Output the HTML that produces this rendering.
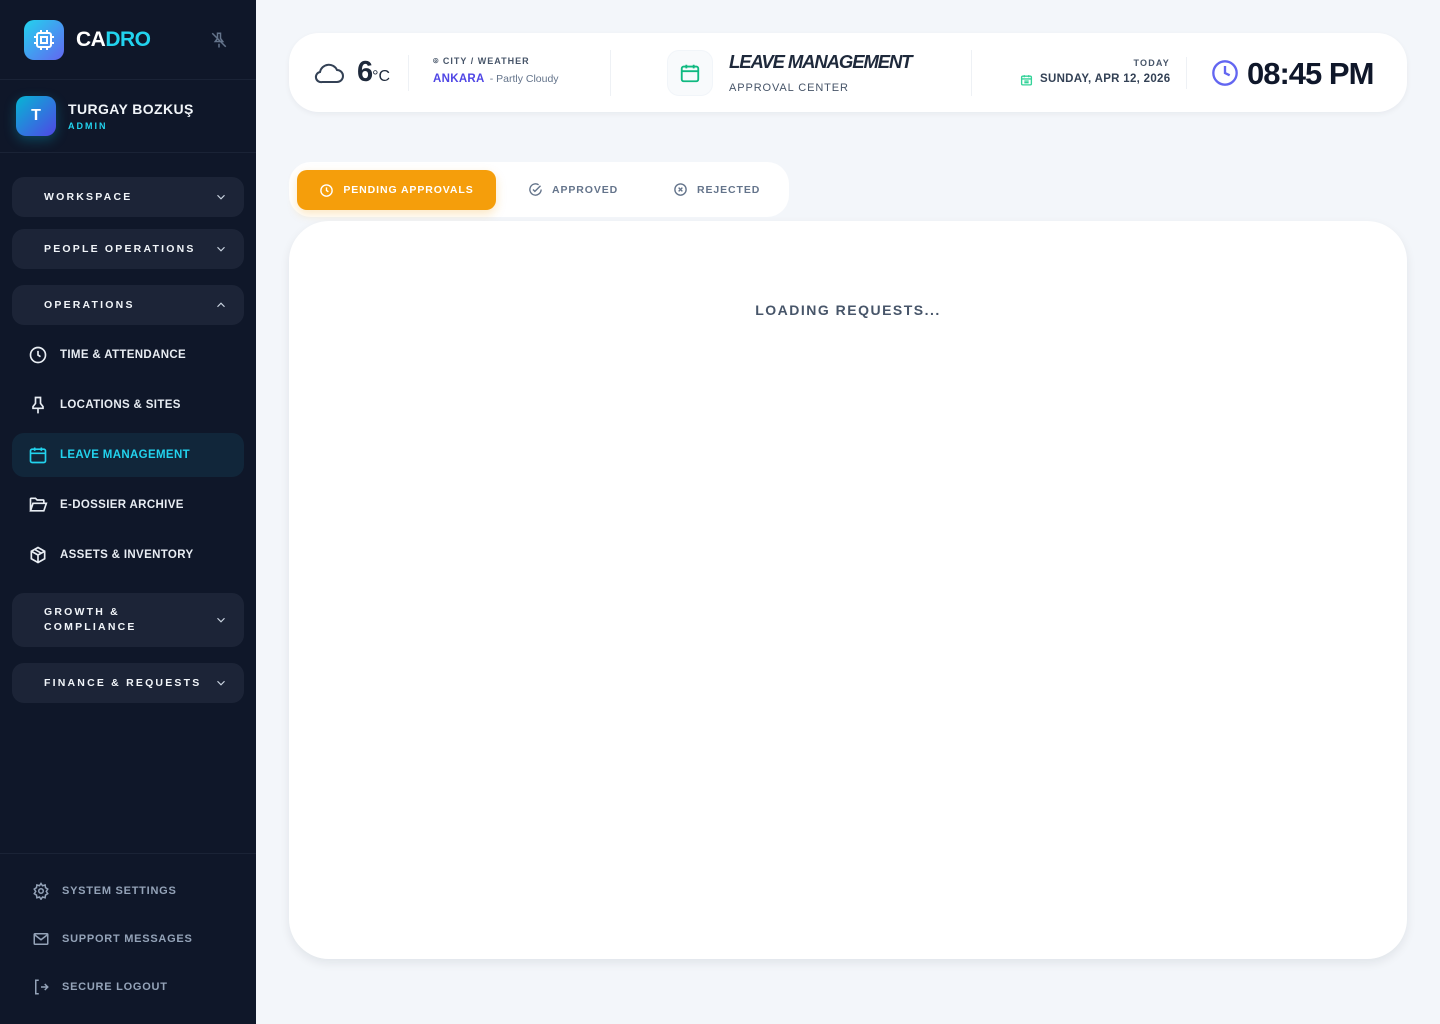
<!DOCTYPE html>
<html><head><meta charset="utf-8"><style>
*{box-sizing:border-box;margin:0;padding:0}
body{width:1440px;height:1024px;overflow:hidden;background:#f3f6fa;font-family:"Liberation Sans",sans-serif;position:relative}
.sb{position:absolute;left:0;top:0;width:256px;height:1024px;background:#0f1729}
.abs{position:absolute}
.grp{position:absolute;left:12px;width:232px;background:#1c2437;border-radius:12px;color:#f1f5f9;font-weight:700;font-size:10.5px;letter-spacing:2.2px;padding-left:32px;display:flex;align-items:center}
.grp svg{position:absolute;right:16px}
.it{position:absolute;left:12px;width:232px;height:44px;display:flex;align-items:center;padding-left:48px;color:#e8edf3;font-size:11.5px;font-weight:700;letter-spacing:.35px}
.it svg{position:absolute;left:16px}
.bt{position:absolute;left:32px;display:flex;align-items:center;color:#94a3b8;font-size:11px;letter-spacing:.75px;font-weight:700}
.bt svg{margin-right:12px}
</style></head><body>
<div class="sb">
  <div class="abs" style="left:24px;top:20px;width:40px;height:40px;border-radius:10px;background:linear-gradient(135deg,#22d3ee,#6366f1);display:flex;align-items:center;justify-content:center">
    <svg width="24" height="24" viewBox="0 0 24 24" fill="none" stroke="#fff" stroke-width="2"><rect x="5" y="5" width="14" height="14" rx="2"/><rect x="9" y="9" width="6" height="6"/><path d="M9 2v3M15 2v3M9 19v3M15 19v3M2 9h3M2 15h3M19 9h3M19 15h3"/></svg>
  </div>
  <div class="abs" style="left:76px;top:28px;font-size:21px;font-weight:800;letter-spacing:-.5px;color:#fff">CA<span style="color:#22d3ee">DRO</span></div>
  <svg class="abs" style="left:210px;top:31px" width="18" height="18" viewBox="0 0 24 24" fill="none" stroke="#64748b" stroke-width="2"><path d="M12 17v5M9 3h6M10 3v7l-3 4h10l-3-4V3M3 3l18 18"/></svg>
  <div class="abs" style="left:0;top:79px;width:256px;height:1px;background:#1a2336"></div>
  <div class="abs" style="left:16px;top:96px;width:40px;height:40px;border-radius:10px;background:linear-gradient(135deg,#06b6d4,#4f46e5);color:#fff;font-weight:700;font-size:16px;display:flex;align-items:center;justify-content:center;box-shadow:0 4px 12px rgba(6,182,212,.3)">T</div>
  <div class="abs" style="left:68px;top:101px;color:#f1f5f9;font-size:14px;font-weight:700;letter-spacing:.4px">TURGAY BOZKUŞ</div>
  <div class="abs" style="left:68px;top:121px;color:#22d3ee;font-size:9px;font-weight:700;letter-spacing:2px">ADMIN</div>
  <div class="abs" style="left:0;top:152px;width:256px;height:1px;background:#1a2336"></div>

  <div class="grp" style="top:177px;height:40px">WORKSPACE<svg width="14" height="14" viewBox="0 0 24 24" fill="none" stroke="#cbd5e1" stroke-width="2"><path d="M6 9l6 6 6-6"/></svg></div>
  <div class="grp" style="top:229px;height:40px">PEOPLE OPERATIONS<svg width="14" height="14" viewBox="0 0 24 24" fill="none" stroke="#cbd5e1" stroke-width="2"><path d="M6 9l6 6 6-6"/></svg></div>
  <div class="grp" style="top:285px;height:40px">OPERATIONS<svg width="14" height="14" viewBox="0 0 24 24" fill="none" stroke="#cbd5e1" stroke-width="2"><path d="M6 15l6-6 6 6"/></svg></div>

  <div class="it" style="top:333px"><svg width="20" height="20" viewBox="0 0 24 24" fill="none" stroke="#e8edf3" stroke-width="2"><circle cx="12" cy="12" r="9"/><path d="M12 7v5l3 2"/></svg>TIME &amp; ATTENDANCE</div>
  <div class="it" style="top:383px"><svg width="20" height="20" viewBox="0 0 24 24" fill="none" stroke="#e8edf3" stroke-width="2"><path d="M12 17v5M8 3h8M9 3v7l-3 4v2h12v-2l-3-4V3"/></svg>LOCATIONS &amp; SITES</div>
  <div class="it" style="top:433px;background:#11263a;border-radius:12px;color:#22d3ee"><svg width="20" height="20" viewBox="0 0 24 24" fill="none" stroke="#22d3ee" stroke-width="2"><rect x="3" y="5" width="18" height="16" rx="2"/><path d="M3 10h18M8 3v4M16 3v4"/></svg>LEAVE MANAGEMENT</div>
  <div class="it" style="top:483px"><svg width="20" height="20" viewBox="0 0 24 24" fill="none" stroke="#e8edf3" stroke-width="2"><path d="M3 19V5a1 1 0 011-1h5l2 2h7a1 1 0 011 1v3M3 19l3-9h16l-3 9z"/></svg>E-DOSSIER ARCHIVE</div>
  <div class="it" style="top:533px"><svg width="20" height="20" viewBox="0 0 24 24" fill="none" stroke="#e8edf3" stroke-width="2"><path d="M12 3l8 4.5v9L12 21l-8-4.5v-9zM4 7.5l8 4.5 8-4.5M12 12v9M8 5.3l8 4.5"/></svg>ASSETS &amp; INVENTORY</div>

  <div class="grp" style="top:593px;height:54px;line-height:15px">GROWTH &amp;<br>COMPLIANCE<svg width="14" height="14" viewBox="0 0 24 24" fill="none" stroke="#cbd5e1" stroke-width="2"><path d="M6 9l6 6 6-6"/></svg></div>
  <div class="grp" style="top:663px;height:40px">FINANCE &amp; REQUESTS<svg width="14" height="14" viewBox="0 0 24 24" fill="none" stroke="#cbd5e1" stroke-width="2"><path d="M6 9l6 6 6-6"/></svg></div>

  <div class="abs" style="left:0;top:853px;width:256px;height:1px;background:#1a2336"></div>
  <div class="bt" style="top:882px"><svg width="18" height="18" viewBox="0 0 24 24" fill="none" stroke="#94a3b8" stroke-width="2"><circle cx="12" cy="12" r="3"/><path d="M12 2l2 3 3.5-1 .5 3.5 3 2-2 3 2 3-3 2-.5 3.5-3.5-1-2 3-2-3-3.5 1L6 17.5l-3-2 2-3-2-3 3-2L6.5 4 10 5z"/></svg>SYSTEM SETTINGS</div>
  <div class="bt" style="top:930px"><svg width="18" height="18" viewBox="0 0 24 24" fill="none" stroke="#94a3b8" stroke-width="2"><rect x="3" y="5" width="18" height="14" rx="1"/><path d="M3 6l9 7 9-7"/></svg>SUPPORT MESSAGES</div>
  <div class="bt" style="top:978px"><svg width="18" height="18" viewBox="0 0 24 24" fill="none" stroke="#94a3b8" stroke-width="2"><path d="M9 3H5v18h4M12 12h9M17 8l4 4-4 4"/></svg>SECURE LOGOUT</div>
</div>

<!-- header -->
<div class="abs" style="left:289px;top:33px;width:1118px;height:79px;background:#fff;border-radius:30px;box-shadow:0 2px 6px rgba(15,23,42,.05)"></div>
<svg class="abs" style="left:313px;top:60px" width="32" height="26" viewBox="0 0 32 26" fill="none" stroke="#334155" stroke-width="2"><path d="M9 22h15a6 6 0 000-12 9 9 0 00-17 2 5 5 0 002 10z"/></svg>
<div class="abs" style="left:357px;top:56px;font-size:29px;font-weight:800;color:#1e293b;letter-spacing:-1px">6<span style="font-size:16px;font-weight:400;letter-spacing:0">°C</span></div>
<div class="abs" style="left:408px;top:55px;width:1px;height:36px;background:#eef1f5"></div>
<div class="abs" style="left:433px;top:56px;font-size:9px;font-weight:700;letter-spacing:1px;color:#475569">⌾ CITY / WEATHER</div>
<div class="abs" style="left:433px;top:73px;font-size:11.5px;font-weight:700;color:#4f46e5;letter-spacing:.3px">ANKARA <span style="color:#64748b;font-weight:400;font-size:10.5px;letter-spacing:0;margin-left:2px">- Partly Cloudy</span></div>
<div class="abs" style="left:610px;top:50px;width:1px;height:46px;background:#eef1f5"></div>
<div class="abs" style="left:667px;top:50px;width:46px;height:46px;border-radius:12px;background:#f8fafc;border:1px solid #f1f5f9;display:flex;align-items:center;justify-content:center"><svg width="22" height="22" viewBox="0 0 24 24" fill="none" stroke="#10b981" stroke-width="2"><rect x="3" y="5" width="18" height="16" rx="2"/><path d="M3 10h18M8 3v4M16 3v4"/></svg></div>
<div class="abs" style="left:729px;top:51px;font-size:18.5px;font-weight:800;font-style:italic;letter-spacing:-1.1px;color:#1e293b">LEAVE MANAGEMENT</div>
<div class="abs" style="left:729px;top:82px;font-size:11px;letter-spacing:.9px;color:#475569">APPROVAL CENTER</div>
<div class="abs" style="left:971px;top:50px;width:1px;height:46px;background:#eef1f5"></div>
<div class="abs" style="left:1100px;top:58px;width:70px;text-align:right;font-size:9px;font-weight:700;letter-spacing:1.2px;color:#475569">TODAY</div>
<svg class="abs" style="left:1020px;top:73px" width="13" height="14" viewBox="0 0 24 24" fill="none" stroke="#34d399" stroke-width="2.5"><rect x="3" y="5" width="18" height="16" rx="2"/><path d="M3 10h18M8 3v4M16 3v4M8 14h8M8 17h8"/></svg>
<div class="abs" style="left:1040px;top:73px;font-size:11.5px;font-weight:700;color:#334155;letter-spacing:.3px">SUNDAY, APR 12, 2026</div>
<div class="abs" style="left:1186px;top:57px;width:1px;height:32px;background:#eef1f5"></div>
<svg class="abs" style="left:1211px;top:59px" width="28" height="28" viewBox="0 0 24 24" fill="none" stroke="#6366f1" stroke-width="2"><circle cx="12" cy="12" r="10"/><path d="M12 6v6l4 2"/></svg>
<div class="abs" style="left:1247px;top:56px;font-size:31px;font-weight:800;color:#0f172a;letter-spacing:-1px">08:45 PM</div>

<!-- tabs -->
<div class="abs" style="left:289px;top:162px;width:500px;height:55px;background:#fff;border-radius:22px"></div>
<div class="abs" style="left:297px;top:170px;width:199px;height:40px;background:#f59e0b;border-radius:10px;box-shadow:0 4px 10px rgba(245,158,11,.25);display:flex;align-items:center;justify-content:center;color:#fff;font-size:10.5px;font-weight:700;letter-spacing:.9px"><svg width="15" height="15" viewBox="0 0 24 24" fill="none" stroke="#fff" stroke-width="2.2" style="margin-right:9px"><circle cx="12" cy="12" r="9"/><path d="M12 7v5l3 2"/></svg>PENDING APPROVALS</div>
<div class="abs" style="left:528px;top:182px;display:flex;align-items:center;color:#64748b;font-size:10.5px;font-weight:700;letter-spacing:.9px"><svg width="15" height="15" viewBox="0 0 24 24" fill="none" stroke="#64748b" stroke-width="2.2" style="margin-right:9px"><path d="M21 12a9 9 0 11-4-7.5M8 12l3 3 9-9"/></svg>APPROVED</div>
<div class="abs" style="left:673px;top:182px;display:flex;align-items:center;color:#64748b;font-size:10.5px;font-weight:700;letter-spacing:.9px"><svg width="15" height="15" viewBox="0 0 24 24" fill="none" stroke="#64748b" stroke-width="2.2" style="margin-right:9px"><circle cx="12" cy="12" r="9"/><path d="M9 9l6 6M15 9l-6 6"/></svg>REJECTED</div>

<!-- content -->
<div class="abs" style="left:289px;top:221px;width:1118px;height:738px;background:#fff;border-radius:40px;box-shadow:0 4px 10px rgba(15,23,42,.08)"></div>
<div class="abs" style="left:289px;top:302px;width:1118px;text-align:center;font-size:14px;font-weight:700;letter-spacing:1.5px;color:#475569">LOADING REQUESTS...</div>
</body></html>
